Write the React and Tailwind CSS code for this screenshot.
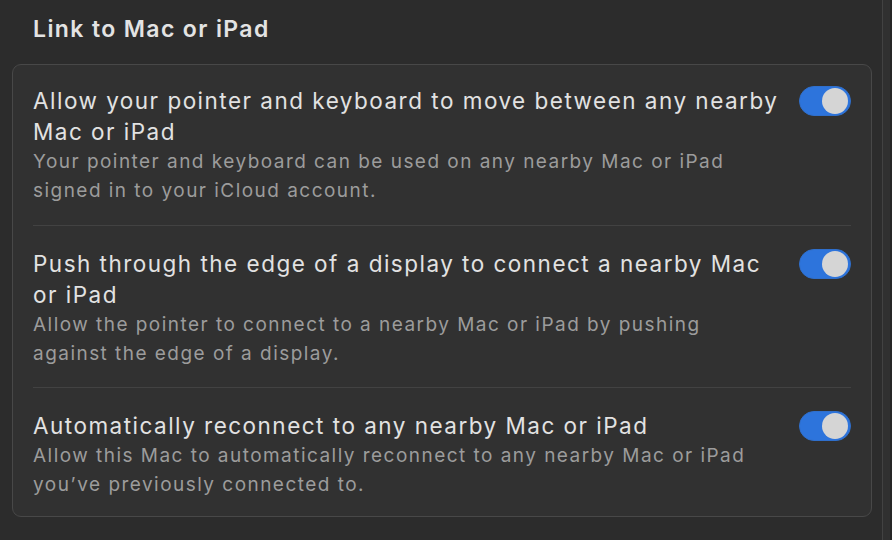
import React from 'react';

const rows = [
  {
    title: 'Allow your pointer and keyboard to move between any nearby Mac or iPad',
    desc: 'Your pointer and keyboard can be used on any nearby Mac or iPad signed in to your iCloud account.',
  },
  {
    title: 'Push through the edge of a display to connect a nearby Mac or iPad',
    desc: 'Allow the pointer to connect to a nearby Mac or iPad by pushing against the edge of a display.',
  },
  {
    title: 'Automatically reconnect to any nearby Mac or iPad',
    desc: 'Allow this Mac to automatically reconnect to any nearby Mac or iPad you\u2019ve previously connected to.',
  },
];

const rowPad = ['pt-[20px] pb-[20px]', 'pt-[22px] pb-[19px]', 'pt-[22px] pb-[17px]'];

function Toggle() {
  return (
    <div className="w-[52px] h-[30px] rounded-full bg-[#2d74dc] border border-[#2f6fcc] flex items-center justify-end pr-[2px] shrink-0">
      <div className="w-[26px] h-[26px] rounded-full bg-[#d5d5d5]" />
    </div>
  );
}

export default function App() {
  return (
    <div
      className="w-[892px] h-[540px] bg-[#2c2c2c] flex overflow-hidden"
      style={{ fontFamily: 'Inter, "Noto Sans", sans-serif' }}
    >
      <div className="flex-1 pl-3 pr-[10px]">
        <h1 className="pl-[21px] pt-[13px] text-[23px] leading-[32px] font-semibold tracking-[0.06em] text-[#e3e3e3]">
          Link to Mac or iPad
        </h1>
        <div className="mt-[19px] rounded-[9px] border border-[#484848] bg-[#313131]">
          {rows.map((r, i) => (
            <div key={i}>
              {i > 0 && <div className="mx-5 h-px bg-[#424242]" />}
              <div className={`flex gap-5 px-5 ${rowPad[i]}`}>
                <div className="flex-1">
                  <div className="text-[22.5px] leading-[31px] tracking-[0.066em] text-[#e2e2e2]">{r.title}</div>
                  <div className="text-[19px] leading-[29px] tracking-[0.077em] text-[#9c9c9c]">{r.desc}</div>
                </div>
                <div className="pt-[1px]">
                  <Toggle />
                </div>
              </div>
            </div>
          ))}
        </div>
      </div>
      <div className="w-[8px] border-l border-[#424242] bg-[#303030]" />
      <div className="w-[2px] bg-[#262626]" />
    </div>
  );
}
